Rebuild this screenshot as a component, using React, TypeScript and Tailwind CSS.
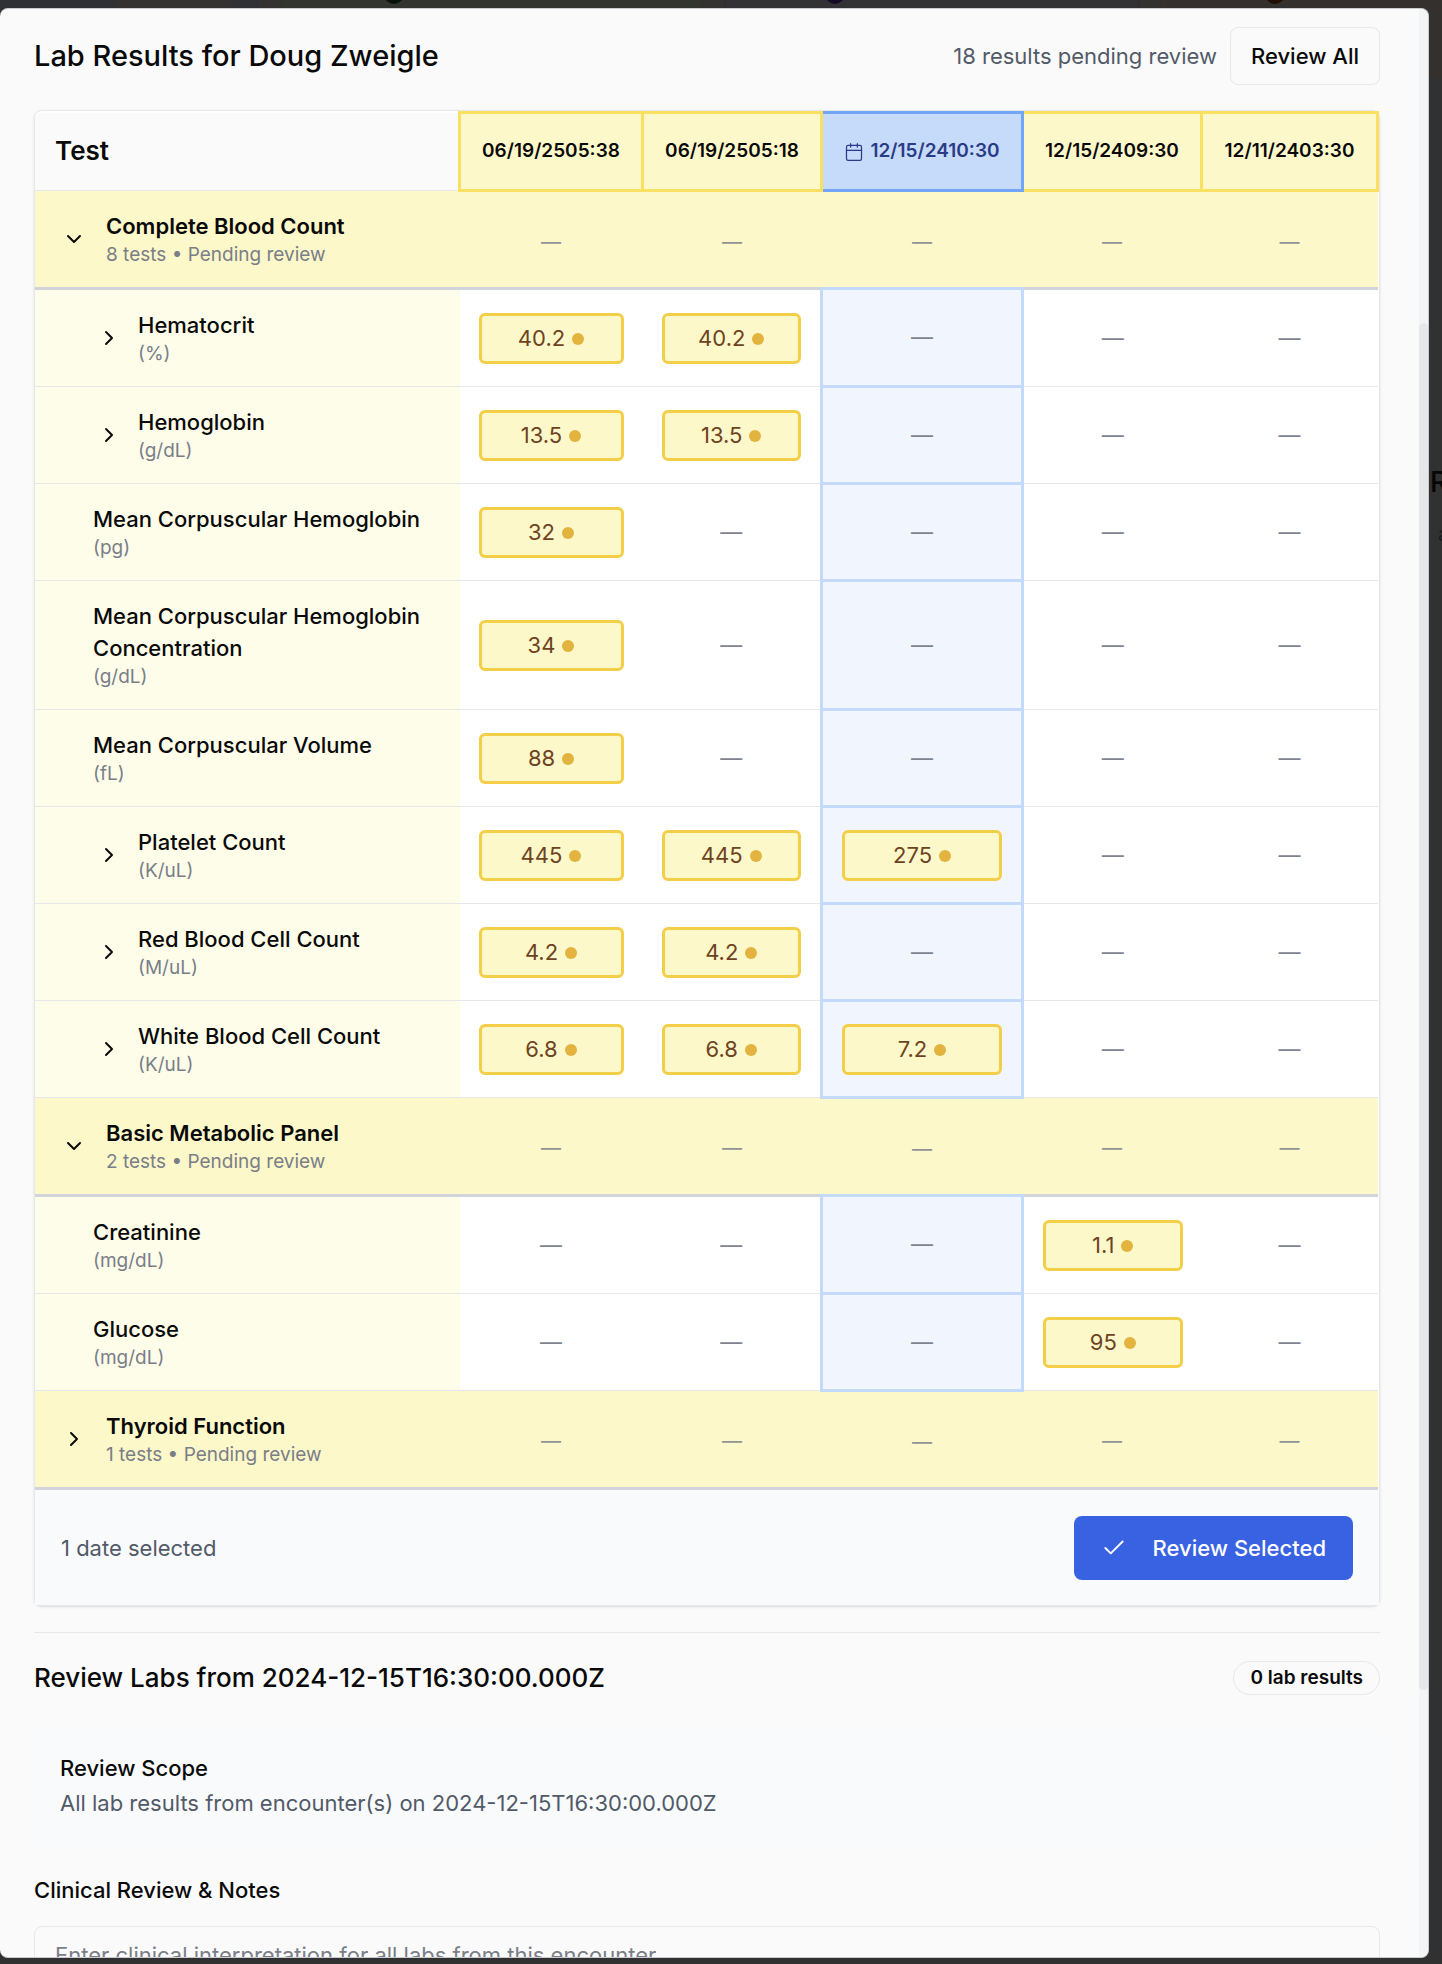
import { Calendar, Check, ChevronDown, ChevronRight } from "lucide-react";

type Group = { name: string; count: number; open: boolean; tests: Test[] };
type Test = { name: string; unit: string; expandable?: boolean; values: (string | null)[] };

const SELECTED = 2;

const dates = ["06/19/2505:38", "06/19/2505:18", "12/15/2410:30", "12/15/2409:30", "12/11/2403:30"];

const groups: Group[] = [
  {
    name: "Complete Blood Count",
    count: 8,
    open: true,
    tests: [
      { name: "Hematocrit", unit: "%", expandable: true, values: ["40.2", "40.2", null, null, null] },
      { name: "Hemoglobin", unit: "g/dL", expandable: true, values: ["13.5", "13.5", null, null, null] },
      { name: "Mean Corpuscular Hemoglobin", unit: "pg", values: ["32", null, null, null, null] },
      { name: "Mean Corpuscular Hemoglobin Concentration", unit: "g/dL", values: ["34", null, null, null, null] },
      { name: "Mean Corpuscular Volume", unit: "fL", values: ["88", null, null, null, null] },
      { name: "Platelet Count", unit: "K/uL", expandable: true, values: ["445", "445", "275", null, null] },
      { name: "Red Blood Cell Count", unit: "M/uL", expandable: true, values: ["4.2", "4.2", null, null, null] },
      { name: "White Blood Cell Count", unit: "K/uL", expandable: true, values: ["6.8", "6.8", "7.2", null, null] },
    ],
  },
  {
    name: "Basic Metabolic Panel",
    count: 2,
    open: true,
    tests: [
      { name: "Creatinine", unit: "mg/dL", values: [null, null, null, "1.1", null] },
      { name: "Glucose", unit: "mg/dL", values: [null, null, null, "95", null] },
    ],
  },
  { name: "Thyroid Function", count: 1, open: false, tests: [] },
];

function GroupRow({ group }: { group: Group }) {
  const Icon = group.open ? ChevronDown : ChevronRight;
  return (
    <tr className="border-b-3 border-[#d1d5db] bg-[#fdf8c9]">
      <td className="px-5 pt-[19px] pb-5">
        <div className="flex items-center gap-[13px]">
          <button
            aria-label={`Toggle ${group.name}`}
            aria-expanded={group.open}
            className="flex size-[38px] items-center justify-center"
          >
            <Icon className="size-6" strokeWidth={2} />
          </button>
          <div>
            <div className="text-[22px] leading-8 font-semibold">{group.name}</div>
            <div className="text-[19px] leading-[25px] text-[#7a7e88]">{group.count} tests • Pending review</div>
          </div>
        </div>
      </td>
      {dates.map((d) => (
        <td key={d} className="pt-1 text-center text-[20px] text-[#8f9296]">
          —
        </td>
      ))}
    </tr>
  );
}

function TestRow({ test }: { test: Test }) {
  return (
    <tr className="border-b border-[#e5e7eb] bg-white">
      <td className="bg-[#fefdea] pt-[19px] pr-5 pb-5 pl-[58px]">
        <div className="flex items-center gap-[13px]">
          {test.expandable && (
            <button
              aria-label={`Expand ${test.name}`}
              aria-expanded={false}
              className="flex size-8 items-center justify-center"
            >
              <ChevronRight className="size-6" strokeWidth={2} />
            </button>
          )}
          <div>
            <div className="text-[22px] leading-8 font-medium">{test.name}</div>
            <div className="text-[19px] leading-[25px] text-[#7a7e88]">({test.unit})</div>
          </div>
        </div>
      </td>
      {test.values.map((v, i) => (
        <td
          key={i}
          className={
            i === SELECTED
              ? "border-3 border-[#c4dafa] bg-[#f0f5fe] px-[19px] text-center"
              : "px-[19px] text-center"
          }
        >
          {v ? (
            <button className="flex h-[51px] w-full items-center justify-center gap-[7px] rounded-md border-3 border-[#f3ce49] bg-[#fdf8c9] text-[22px] text-[#6e4322]">
              {v}
              <span className="mt-0.5 size-3 rounded-full bg-[#e2b43f]" />
            </button>
          ) : (
            <span className="text-[22px] text-[#7f8390]">—</span>
          )}
        </td>
      ))}
    </tr>
  );
}

/* The dimmed page that stays visible around the dialog's edges. */
function Backdrop() {
  return (
    <div aria-hidden="true" className="absolute inset-0 overflow-hidden bg-[#313131] text-[#060606]">
      <div className="flex h-[76px] border-b border-[#3a3128] bg-[#333231]">
        <div className="w-[115px] bg-[#303134]" />
        <div className="w-[116px]" />
        <div className="w-[27px] border-r border-[#283040] bg-[#303134]" />
        <div className="w-[26px]" />
        <div className="flex-1 border-x border-[#2a382c] bg-[#32342f] pl-[99px]">
          <div className="-mt-4 size-5 rounded-full bg-[#07120c]" />
        </div>
        <div className="w-[26px]" />
        <div className="flex-1 border-x border-[#2d2c38] bg-[#323235] pl-[99px]">
          <div className="-mt-4 size-5 rounded-full bg-[#140a22]" />
        </div>
        <div className="w-[26px]" />
        <div className="w-[277px] border-l border-[#40301f] bg-[#33302d] pl-[99px]">
          <div className="-mt-4 size-5 rounded-full bg-[#210e05]" />
        </div>
      </div>
      <div className="mt-[388px] ml-auto w-3 overflow-hidden">
        <div className="text-[28px] leading-9 font-medium">R</div>
        <div className="mt-[20px] pl-2 text-[20px] leading-7 text-[#1a1a1a]">a</div>
      </div>
    </div>
  );
}

export default function App() {
  return (
    <div className="relative flex h-screen flex-col overflow-hidden pt-2 pr-[13px] pb-[6px] font-[Inter,sans-serif] text-[#0a0a0a]">
      <Backdrop />
      <main
        role="dialog"
        aria-label="Lab results"
        className="relative flex min-h-0 flex-1 overflow-hidden rounded-lg border-y border-r border-[#c9cbd0] bg-[#fafafa]"
      >
        <div className="min-w-0 flex-1 overflow-hidden pt-[18px] pr-[39px] pl-[34px]">
          <header className="flex items-center justify-between">
            <h1 className="text-[29px] leading-9 font-medium">Lab Results for Doug Zweigle</h1>
            <div className="flex items-center gap-[13px]">
              <span className="text-[22px] text-[#525a68]">18 results pending review</span>
              <button className="h-[58px] rounded-lg border border-[#e5e7eb] px-5 text-[22px] font-medium">
                Review All
              </button>
            </div>
          </header>

          <section className="mt-[25px] rounded-lg border border-[#e5e7eb] bg-white shadow-sm">
            <table className="w-full table-fixed border-collapse">
              <colgroup>
                <col />
                <col className="w-[183px]" />
                <col className="w-[179px]" />
                <col className="w-[201px]" />
                <col className="w-[179px]" />
                <col className="w-[176px]" />
              </colgroup>
              <thead>
                <tr className="h-[78px] border-b border-[#e5e7eb]">
                  <th className="rounded-tl-lg bg-[#fafafa] px-5 text-left text-[26px] leading-8 font-semibold">
                    Test
                  </th>
                  {dates.map((d, i) => (
                    <th
                      key={d}
                      className={
                        i === SELECTED
                          ? "border-3 border-[#73a5f6] bg-[#c6dafa] text-[19px] font-semibold text-[#2a3b86]"
                          : "border-3 border-[#f9e060] bg-[#fdf8c9] text-[19px] font-semibold"
                      }
                    >
                      <span className="flex items-center justify-center gap-[6px]">
                        {i === SELECTED && <Calendar className="size-5" strokeWidth={1.5} />}
                        {d}
                      </span>
                    </th>
                  ))}
                </tr>
              </thead>
              <tbody>
                {groups.flatMap((g) => [
                  <GroupRow key={g.name} group={g} />,
                  ...g.tests.map((t) => <TestRow key={t.name} test={t} />),
                ])}
              </tbody>
            </table>
            <div className="flex items-center justify-between bg-[#f9fafc] px-[26px] pt-[26px] pb-[25px]">
              <span className="text-[22px] text-[#525a68]">1 date selected</span>
              <button className="flex h-16 items-center gap-[26px] rounded-lg bg-[#3962e3] px-[27px] text-[22px] font-medium text-white">
                <Check className="size-[26px]" strokeWidth={1.75} />
                Review Selected
              </button>
            </div>
          </section>

          <section className="mt-[26px] border-t border-[#e5e7eb] pt-[27px]">
            <div className="flex items-center justify-between">
              <h2 className="text-[26px] leading-9 font-medium">Review Labs from 2024-12-15T16:30:00.000Z</h2>
              <span className="flex h-[34px] items-center rounded-full border border-[#e5e7eb] px-4 text-[19px] font-semibold">
                0 lab results
              </span>
            </div>
            <div className="mt-[30px] rounded-lg bg-[#f9fafc] p-[26px]">
              <h3 className="text-[22px] leading-8 font-medium">Review Scope</h3>
              <p className="mt-[3px] text-[22px] leading-8 text-[#525a68]">
                All lab results from encounter(s) on 2024-12-15T16:30:00.000Z
              </p>
            </div>
            <label htmlFor="notes" className="mt-[29px] block text-[22px] leading-8 font-medium">
              Clinical Review &amp; Notes
            </label>
            <textarea
              id="notes"
              rows={5}
              placeholder="Enter clinical interpretation for all labs from this encounter..."
              className="mt-5 block w-full resize-none rounded-lg border border-[#e5e7eb] bg-transparent px-5 py-3 text-[22px] leading-8 placeholder:text-[#7a7e88]"
            />
          </section>
        </div>
        <div className="w-[9px] bg-[#f3f4f6] pt-[314px]">
          <div className="h-[1367px] rounded-full bg-[#e5e7eb]" />
        </div>
      </main>
    </div>
  );
}
